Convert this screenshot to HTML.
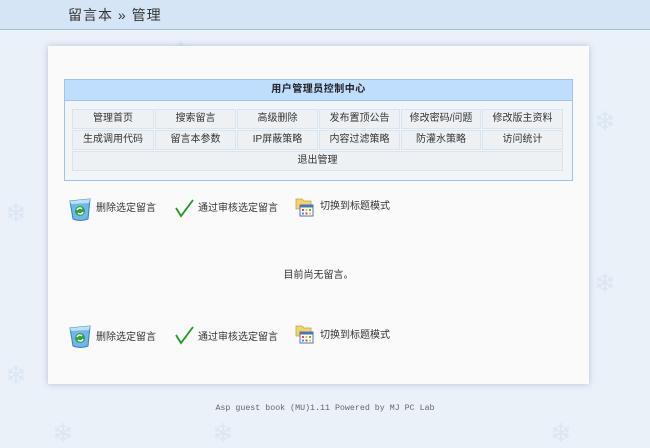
<!DOCTYPE html>
<html><head><meta charset="utf-8"><style>
*{margin:0;padding:0;box-sizing:border-box}
body{width:650px;height:444px;background:#eaf1f9;font-family:"Liberation Sans","Noto Sans CJK SC",sans-serif;font-size:10px;color:#333;position:relative;overflow:hidden}
.hd{position:absolute;left:0;top:0;width:650px;height:30px;background:#d6e5f6;border-bottom:1px solid #9fc0e4}
.hd span{position:absolute;left:68px;top:5px;font-size:14px;color:#333;letter-spacing:1px}
.flake{position:absolute;color:#dbe6f3;font-size:26px;line-height:1}
.panel{position:absolute;left:48px;top:46px;width:541px;height:338px;background:#fafafa;box-shadow:0 0 6px rgba(120,140,170,.45)}
.tbl{position:absolute;left:16px;top:33px;width:509px;height:102px;border:1px solid #9fc2e8;background:#f2f5f8}
.th{height:21px;background:#bfddfc;border-bottom:1px solid #9fc2e8;text-align:center;font-weight:bold;font-size:10px;line-height:20px;color:#222;letter-spacing:.5px}
.c{position:absolute;height:20px;border:1px solid #d8e4f0;background:#eef1f4;text-align:center;font-size:10px;line-height:18px;color:#333}
.act{position:absolute;font-size:10px;color:#333}
.msg{position:absolute;left:0;width:541px;top:220px;text-align:center;font-size:10px}
.ft{position:absolute;top:404px;left:0;width:650px;text-align:center;font-family:"Liberation Mono",monospace;font-size:8.3px;color:#666}
</style></head><body>
<div class="hd"><span>留言本 » 管理</span></div>
<div class="flake" style="left:5px;top:200px">❄</div>
<div class="flake" style="left:5px;top:362px">❄</div>
<div class="flake" style="left:170px;top:38px">❄</div>
<div class="flake" style="left:594px;top:108px">❄</div>
<div class="flake" style="left:594px;top:270px">❄</div>
<div class="flake" style="left:52px;top:420px">❄</div>
<div class="flake" style="left:212px;top:420px">❄</div>
<div class="flake" style="left:550px;top:420px">❄</div>
<div class="panel">
<div class="tbl">
<div class="th">用户管理员控制中心</div>
<div class="c" style="left:7px;top:29px;width:82px">管理首页</div>
<div class="c" style="left:90px;top:29px;width:81px">搜索留言</div>
<div class="c" style="left:172px;top:29px;width:81px">高级删除</div>
<div class="c" style="left:254px;top:29px;width:81px">发布置顶公告</div>
<div class="c" style="left:336px;top:29px;width:80px">修改密码/问题</div>
<div class="c" style="left:417px;top:29px;width:81px">修改版主资料</div>
<div class="c" style="left:7px;top:50px;width:82px">生成调用代码</div>
<div class="c" style="left:90px;top:50px;width:81px">留言本参数</div>
<div class="c" style="left:172px;top:50px;width:81px">IP屏蔽策略</div>
<div class="c" style="left:254px;top:50px;width:81px">内容过滤策略</div>
<div class="c" style="left:336px;top:50px;width:80px">防灌水策略</div>
<div class="c" style="left:417px;top:50px;width:81px">访问统计</div>
<div class="c" style="left:7px;top:71px;width:491px">退出管理</div>
</div>
<div class="msg">目前尚无留言。</div>
</div>
<svg style="position:absolute;left:0;top:0" width="650" height="444">
<g id="acts">
<g transform="translate(68,198)">
<path d="M2 3 L22 1 L20 21 Q12 24 5 21 Z" fill="#6fb6ea" stroke="#3a7fc0" stroke-width="1"/>
<path d="M2 3 L22 1 L21 5 L3 6 Z" fill="#bfe2fa"/>
<circle cx="12" cy="13" r="5" fill="#2ea532"/>
<path d="M9 12 a3 3 0 0 1 5 -1 M15 14 a3 3 0 0 1 -5 1" stroke="#fff" stroke-width="1.5" fill="none"/>
</g>
<path d="M176 208 L181 216 L193 200" stroke="#1c9a1c" stroke-width="1.8" fill="none"/>
<g transform="translate(295,197)">
<path d="M1 2 H7 L9 4 H16 V12 H1 Z" fill="#f2d46a" stroke="#c9a23a" stroke-width="0.8"/>
<rect x="5" y="8" width="13" height="11" fill="#fff" stroke="#4a74b8"/>
<rect x="5" y="8" width="13" height="2.5" fill="#4a74b8"/>
<rect x="7" y="12" width="2" height="2" fill="#e44"/><rect x="10.5" y="12" width="2" height="2" fill="#fb3"/><rect x="14" y="12" width="2" height="2" fill="#4b4"/>
<rect x="7" y="15.5" width="2" height="2" fill="#48f"/><rect x="10.5" y="15.5" width="2" height="2" fill="#e44"/><rect x="14" y="15.5" width="2" height="2" fill="#fb3"/>
</g>
</g>
<use href="#acts" y="127"/>
</svg>
<div class="act" style="left:96px;top:199px">删除选定留言</div>
<div class="act" style="left:198px;top:199px">通过审核选定留言</div>
<div class="act" style="left:320px;top:197px">切换到标题模式</div>
<div class="act" style="left:96px;top:328px">删除选定留言</div>
<div class="act" style="left:198px;top:328px">通过审核选定留言</div>
<div class="act" style="left:320px;top:326px">切换到标题模式</div>
<div class="ft">Asp guest book (MU)1.11 Powered by MJ PC Lab</div>
</body></html>
